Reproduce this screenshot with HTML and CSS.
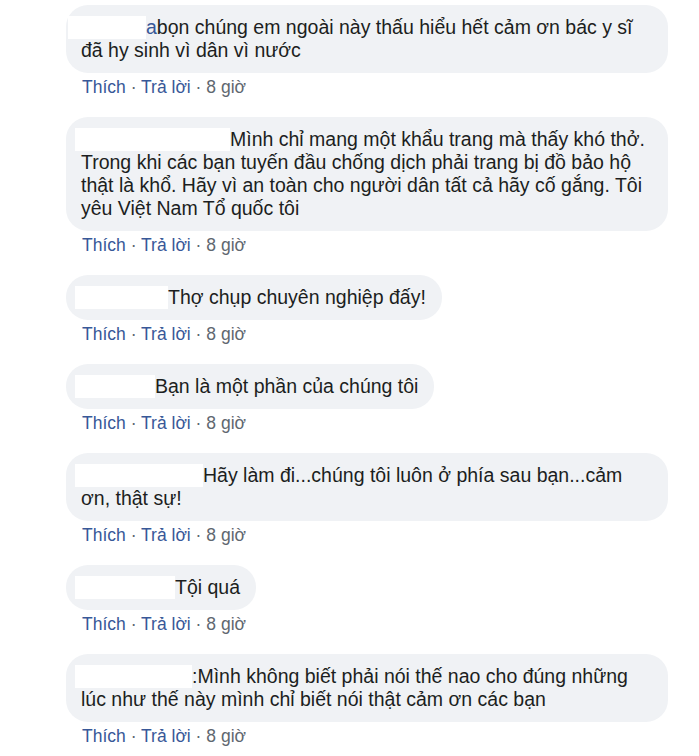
FILE: index.html
```html
<!DOCTYPE html>
<html lang="vi">
<head>
    <meta charset="UTF-8">
    <meta name="viewport" content="width=device-width, initial-scale=1.0">
    <title>Bình luận</title>
    <link rel="stylesheet" href="styles.css">
</head>
<body>
    <div class="comments">
        <div class="comment">
            <div class="bubble"><span class="name name-1"></span><span class="tail">a</span>bọn chúng em ngoài này thấu hiểu hết cảm ơn bác y sĩ đã hy sinh vì dân vì nước</div>
            <div class="actions"><a href="#">Thích</a> · <a href="#">Trả lời</a> · 8 giờ</div>
        </div>

        <div class="comment">
            <div class="bubble"><span class="name name-2"></span>Mình chỉ mang một khẩu trang mà thấy khó thở. Trong khi các bạn tuyến đầu chống dịch phải trang bị đồ bảo hộ thật là khổ. Hãy vì an toàn cho người dân tất cả hãy cố gắng. Tôi yêu Việt Nam Tổ quốc tôi</div>
            <div class="actions"><a href="#">Thích</a> · <a href="#">Trả lời</a> · 8 giờ</div>
        </div>

        <div class="comment">
            <div class="bubble"><span class="name name-3"></span>Thợ chụp chuyên nghiệp đấy!</div>
            <div class="actions"><a href="#">Thích</a> · <a href="#">Trả lời</a> · 8 giờ</div>
        </div>

        <div class="comment">
            <div class="bubble"><span class="name name-4"></span>Bạn là một phần của chúng tôi</div>
            <div class="actions"><a href="#">Thích</a> · <a href="#">Trả lời</a> · 8 giờ</div>
        </div>

        <div class="comment">
            <div class="bubble"><span class="name name-5"></span>Hãy làm đi...chúng tôi luôn ở phía sau bạn...cảm ơn, thật sự!</div>
            <div class="actions"><a href="#">Thích</a> · <a href="#">Trả lời</a> · 8 giờ</div>
        </div>

        <div class="comment">
            <div class="bubble"><span class="name name-6"></span>Tội quá</div>
            <div class="actions"><a href="#">Thích</a> · <a href="#">Trả lời</a> · 8 giờ</div>
        </div>

        <div class="comment">
            <div class="bubble"><span class="name name-7"></span>:Mình không biết phải nói thế nao cho đúng những lúc như thế này mình chỉ biết nói thật cảm ơn các bạn</div>
            <div class="actions"><a href="#">Thích</a> · <a href="#">Trả lời</a> · 8 giờ</div>
        </div>
    </div>
</body>
</html>
```

FILE: styles.css
```css
body {
    margin: 0;
    background: #fff;
    font-family: "Liberation Sans", Helvetica, Arial, sans-serif;
}
.comments {
    padding: 5px 0 0 66px;
    width: 602px;
}
.comment {
    margin-bottom: 20px;
}
.bubble {
    display: inline-block;
    box-sizing: border-box;
    max-width: 602px;
    padding: 11px 16px 11px 15px;
    background: #f0f2f5;
    border-radius: 22px;
    font-size: 19.5px;
    line-height: 23px;
    color: #1c1e21;
}
.name {
    display: inline-block;
    height: 23px;
    margin-left: -6px;
    vertical-align: top;
    background: #fff;
}
.name-1 { width: 78px; margin-left: -13px; }
.name-2 { width: 155px; }
.name-3 { width: 93px; }
.name-4 { width: 80px; }
.name-5 { width: 128px; }
.name-6 { width: 100px; }
.name-7 { width: 117px; }
.tail {
    color: #385898;
}
.actions {
    margin: 4px 0 0 16px;
    font-size: 17.5px;
    line-height: 20px;
    color: #606770;
}
.actions a {
    color: #385898;
    text-decoration: none;
}
```
